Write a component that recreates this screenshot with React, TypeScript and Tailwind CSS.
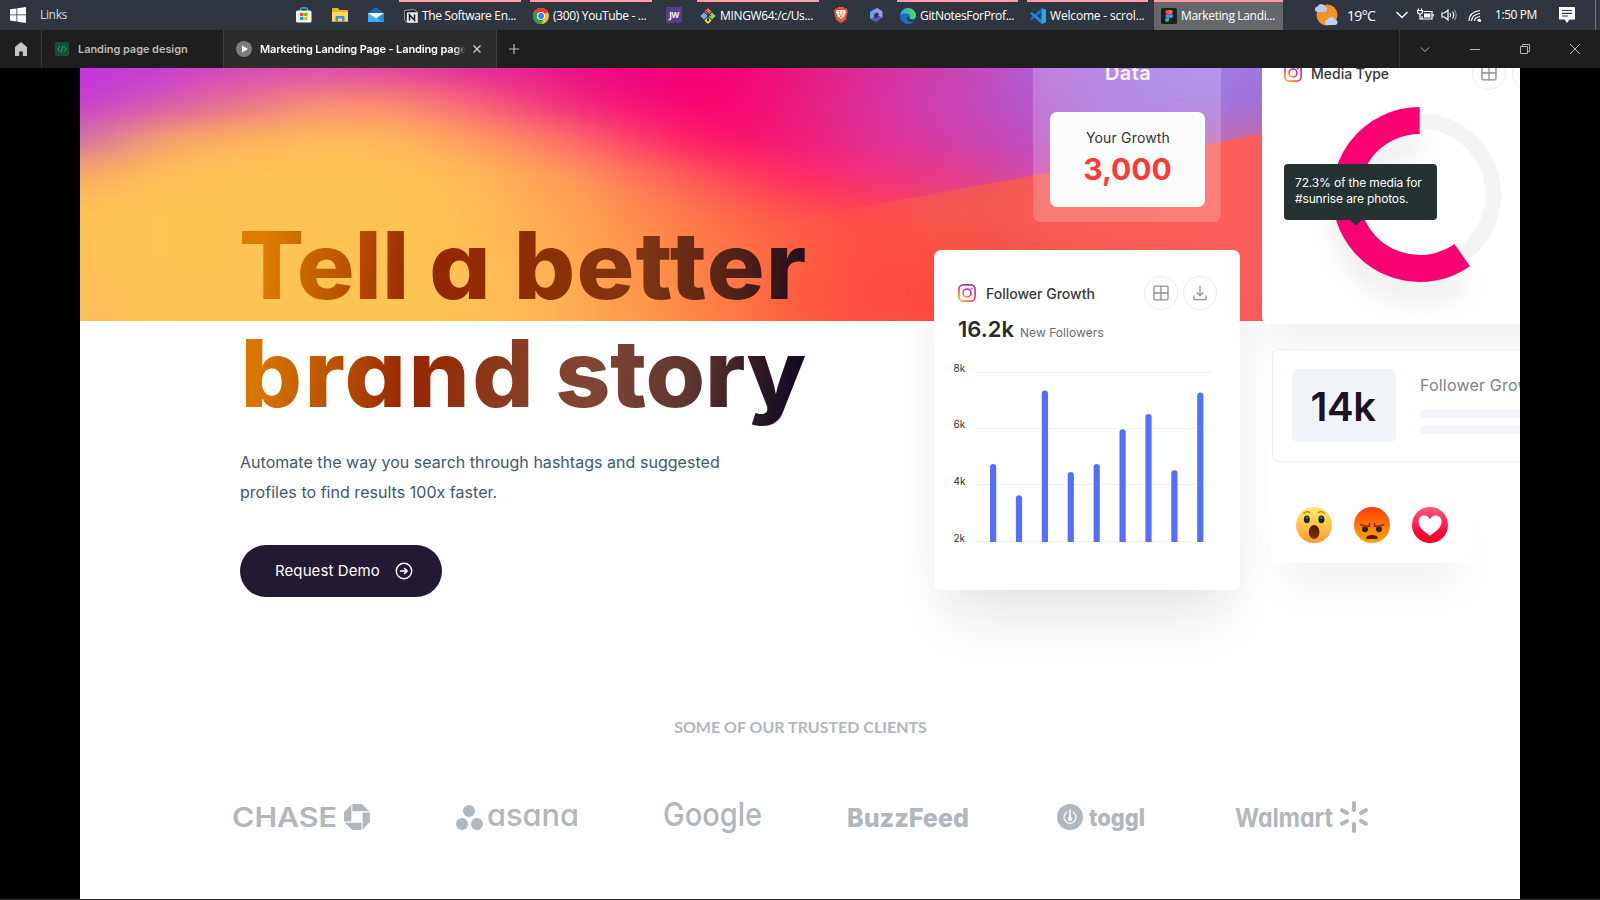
import React from "react";
import { SiBrave, SiChase } from "react-icons/si";

const heroMesh: string[][] = [
  ["#c034e0","#c93cd4","#d646bc","#dd4cb0","#e0409f","#e4289b","#e9148c","#ee0080","#f80070","#e8187f","#d830a0","#c843b4","#b060d8","#a070e0","#a080e8","#9c78dc"],
  ["#c83cd0","#d458b0","#e8748c","#fb9076","#fc8a70","#f8607a","#f03080","#f40c78","#fb006e","#e8207e","#d930a0","#c848b8","#b058d0","#a070e0","#a474e4","#a070d8"],
  ["#d070a8","#f8a468","#ffb45c","#ffbc58","#ffb85a","#ff9c60","#ff7468","#fc3c6c","#fd1068","#f01c78","#e0309a","#cf40a8","#bc50c8","#a468d8","#b06cc4","#d070a0"],
  ["#fdaa64","#ffc055","#ffc453","#ffc453","#ffc453","#ffb856","#ff9e5a","#ff7658","#ff4858","#ff2868","#f23080","#e23c90","#cc4cb0","#d060a0","#ff6060","#ff6060"],
  ["#ffc455","#ffc653","#ffc453","#ffc453","#ffc353","#ffbb54","#ffa852","#ff8850","#ff6c48","#ff5048","#ff4050","#f05060","#f05868","#ff5a5c","#ff5e5c","#ff6060"],
  ["#ffc455","#ffc653","#ffc453","#ffc453","#ffc453","#ffbe54","#ffac50","#ff914c","#ff7846","#ff6042","#ff4a40","#ff4e46","#ff5850","#ff5d58","#ff5e5c","#ff6060"],
  ["#ffc058","#ffc554","#ffc453","#ffc453","#ffc453","#ffc055","#ffb054","#ff964a","#ff7c44","#ff6240","#ff4b3e","#ff4e42","#ff554c","#ff5a54","#ff5e5c","#ff6060"],
  ["#ffbc5c","#ffc455","#ffc453","#ffc453","#ffc453","#ffc055","#ffb054","#ff9848","#ff7e44","#ff6240","#ff4c40","#ff4e42","#ff554c","#ff5a54","#ff5e5c","#ff6060"],
];

function HeroBackdrop() {
  return (
    <svg className="absolute left-0 top-0" width="1440" height="253" viewBox="0 0 1440 253">
      <defs>
        <filter id="soft" x="-10%" y="-40%" width="120%" height="180%" colorInterpolationFilters="sRGB">
          <feGaussianBlur stdDeviation="34 15" />
        </filter>
        <linearGradient id="wedge" gradientUnits="userSpaceOnUse" x1="660" x2="1240" y1="0" y2="0">
          <stop offset="0" stopColor="#ff6a48" stopOpacity="0" />
          <stop offset="0.2" stopColor="#ff6048" stopOpacity="0.25" />
          <stop offset="0.42" stopColor="#f25a4c" stopOpacity="0.85" />
          <stop offset="0.6" stopColor="#fb5c54" />
          <stop offset="0.9" stopColor="#ff605e" />
        </linearGradient>
        <radialGradient id="wedgeLow" gradientUnits="userSpaceOnUse" cx="0" cy="0" r="1" gradientTransform="translate(850 225) scale(185 85)">
          <stop offset="0" stopColor="#ff493e" stopOpacity="0.9" />
          <stop offset="1" stopColor="#ff4c40" stopOpacity="0" />
        </radialGradient>
      </defs>
      <g filter="url(#soft)">
        {heroMesh.map((row, r) =>
          row.map((c, i) => (
            <rect
              key={`${r}-${i}`}
              x={i === 0 ? -160 : i * 80 - 40}
              y={r === 0 ? -90 : r * 36 - 18}
              width={i === 0 ? 201 : i === 15 ? 400 : 81}
              height={r === 0 ? 109 : r === 7 ? 120 : 37}
              fill={c}
            />
          )),
        )}
      </g>
      <polygon points="660,161 1182,66 1440,20 1440,253 660,253" fill="url(#wedge)" />
      <polygon points="660,161 1182,66 1182,253 660,253" fill="url(#wedgeLow)" />
    </svg>
  );
}

function InstaIcon({ id }: { id: string }) {
  return (
    <svg width="18" height="18" viewBox="0 0 18 18" fill="none">
      <defs>
        <linearGradient id={id} x1="0.1" y1="1" x2="0.75" y2="0">
          <stop offset="0" stopColor="#ffb52e" />
          <stop offset="0.45" stopColor="#ff2f5a" />
          <stop offset="0.75" stopColor="#d22a90" />
          <stop offset="1" stopColor="#8a3ac8" />
        </linearGradient>
      </defs>
      <rect x="0.9" y="0.9" width="16.2" height="16.2" rx="4.4" stroke={`url(#${id})`} strokeWidth="1.6" />
      <circle cx="9" cy="9" r="4" stroke={`url(#${id})`} strokeWidth="1.6" />
      <circle cx="13.6" cy="4.4" r="1" fill="#c82a9a" />
    </svg>
  );
}

function RoundButton({ kind }: { kind: "grid" | "download" }) {
  return (
    <div className="flex size-[34px] shrink-0 items-center justify-center rounded-full border border-[#ebeeee] text-[#8f8f8f]">
      <svg width="16" height="16" viewBox="0 0 16 16" fill="none" stroke="currentColor" strokeWidth="1.3" strokeLinecap="round" strokeLinejoin="round">
        {kind === "grid" ? (
          <>
            <rect x="1" y="1.2" width="14" height="13.6" rx="1.4" />
            <path d="M8 1.2v13.6M1 8h14" />
          </>
        ) : (
          <>
            <path d="M8 1.2v9.2M5.2 7.8 8 10.6l2.8-2.8" />
            <path d="M2 10.8v2.6c0 .8.5 1.3 1.3 1.3h9.4c.8 0 1.3-.5 1.3-1.3v-2.6" />
          </>
        )}
      </svg>
    </div>
  );
}

const bars = [78, 46.7, 151.3, 70, 78, 112.7, 128, 71.7, 149.3];

function FollowerCard() {
  return (
    <div className="mt-[28px] h-[340px] w-[306px] rounded-[7px] bg-white pt-[26px] shadow-[0_44px_50px_-14px_rgba(0,0,0,0.09),0_0_50px_rgba(0,0,0,0.03)]">
      <div className="flex items-center pl-6 pr-[23px]">
        <InstaIcon id="ig-a" />
        <span className="ml-[10px] flex-1 text-[14px] font-medium text-[#383838]">Follower Growth</span>
        <div className="flex gap-[5px]">
          <RoundButton kind="grid" />
          <RoundButton kind="download" />
        </div>
      </div>
      <div className="mt-[5px] flex items-baseline pl-6">
        <span className="text-[22px] font-semibold leading-[28px] text-[#2b2b2b]">16.2k</span>
        <span className="ml-[6px] text-[12px] tracking-[0.005em] text-[#6a6a6a]">New Followers</span>
      </div>
      <svg className="mt-[15px] block" width="306" height="200" viewBox="0 0 306 200">
        {[14.5, 70.5, 126.5, 183.5].map((y) => (
          <rect key={y} x="42" y={y - 0.5} width="236" height="1" fill="#eff2f3" />
        ))}
        {([["8k", 14], ["6k", 70], ["4k", 126.5], ["2k", 183.5]] as [string, number][]).map(([t, y]) => (
          <text key={t} x="19.5" y={y} fontSize="10" fill="#2f2f2f" fontFamily="Inter, sans-serif">{t}</text>
        ))}
        {bars.map((h, i) => (
          <path
            key={i}
            d={`M${56 + i * 25.9} 184V${184 - h + 3}a3.1 3.1 0 0 1 6.2 0V184z`}
            fill="#546fff"
          />
        ))}
      </svg>
    </div>
  );
}

function MediaCard() {
  return (
    <div className="flow-root h-[256px] w-[330px] rounded-b-[7px] bg-white shadow-[0_20px_50px_rgba(0,0,0,0.06)]">
      <div className="-mt-3 flex items-center pl-[22px]">
        <InstaIcon id="ig-b" />
        <span className="ml-[9px] w-[161px] text-[14px] font-medium text-[#383838]">Media Type</span>
        <div className="flex gap-[6px]">
          <RoundButton kind="grid" />
          <RoundButton kind="download" />
        </div>
      </div>
      <div className="relative">
        <svg className="block" width="258" height="230" viewBox="0 0 258 230">
          <defs>
            <filter id="donut-shadow" x="-30%" y="-30%" width="160%" height="170%">
              <feGaussianBlur stdDeviation="13" />
            </filter>
          </defs>
          <g transform="translate(157.700 104.5)" fill="none">
            <path d="M0 -74A74 74 0 1 0 42 61" transform="translate(0 22)" stroke="#000" strokeOpacity="0.08" strokeWidth="24" filter="url(#donut-shadow)" />
            <path d="M0 -73.4A73.4 73.4 0 0 1 42.4 60" stroke="#f4f4f4" strokeWidth="15.5" />
            <path d="M0 -74A74 74 0 1 0 42.5 60.6" stroke="#f90072" strokeWidth="27" />
          </g>
        </svg>
        <div className="absolute left-[22px] top-[74px] h-[56px] w-[153px] rounded-[4px] bg-[#263132] pl-[11px] pt-[11px] text-[12px] leading-[16px] tracking-[-0.012em] text-white">
          72.3% of the media for<br />#sunrise are photos.
          <svg className="absolute left-[64px] top-[55px]" width="16" height="7" viewBox="0 0 16 7">
            <path d="M1 0h14L8 6.5z" fill="#263132" />
          </svg>
        </div>
      </div>
    </div>
  );
}

function CountCard() {
  return (
    <div className="ml-[10px] mt-[25px] flex h-[113px] w-[330px] rounded-[7px] border border-[#e9eef1] bg-white pl-[19px] pt-[19px]">
      <div className="flex h-[73px] w-[104px] items-center justify-center rounded-[6px] bg-[#f1f4f9] pr-[2px] pt-[2px] text-[40px] font-semibold tracking-[-0.01em] text-[#1b1024]">
        14k
      </div>
      <div className="ml-6 w-[180px] pt-[4px]">
        <p className="whitespace-nowrap text-[16px] leading-6 tracking-[0.012em] text-[#7d828c]">Follower Growth</p>
        <div className="mt-[13px] h-2 rounded-full bg-[#f1f4f9]" />
        <div className="mt-2 h-2 rounded-full bg-[#f1f4f9]" />
      </div>
    </div>
  );
}

function Reactions() {
  return (
    <div className="ml-[10px] mt-[25px] flex h-[76px] w-[199px] items-center gap-[22px] rounded-[7px] bg-white pl-6 shadow-[0_34px_40px_-10px_rgba(0,0,0,0.05)]">
      <svg width="36" height="36" viewBox="0 0 36 36">
        <defs>
          <linearGradient id="wow" x2="0" y2="1"><stop stopColor="#fdee6c" /><stop offset="1" stopColor="#ff9a2e" /></linearGradient>
          <linearGradient id="mouth" x2="0" y2="1"><stop stopColor="#4b1a04" /><stop offset="1" stopColor="#7c3304" /></linearGradient>
        </defs>
        <circle cx="18" cy="18" r="18" fill="url(#wow)" />
        <ellipse cx="10.8" cy="12.4" rx="3" ry="3.8" fill="#1f2730" />
        <ellipse cx="25.4" cy="12.4" rx="3" ry="3.8" fill="#1f2730" />
        <circle cx="11" cy="10.8" r="1.1" fill="#5b6d80" /><circle cx="25.4" cy="10.8" r="1.1" fill="#5b6d80" />
        <ellipse cx="18.1" cy="25" rx="5.3" ry="7" fill="url(#mouth)" />
        <path d="M7.8 6.2Q10.5 3.6 13.8 5.4M22.4 5.4Q25.7 3.6 28.4 6.2" stroke="#e8791c" strokeWidth="1.5" fill="none" strokeLinecap="round" />
      </svg>
      <svg width="36" height="36" viewBox="0 0 36 36">
        <defs><linearGradient id="angry" x2="0" y2="1"><stop stopColor="#fb3b0c" /><stop offset="0.6" stopColor="#ff8208" /><stop offset="1" stopColor="#ffa60a" /></linearGradient></defs>
        <circle cx="18" cy="18" r="18" fill="url(#angry)" />
        <circle cx="11" cy="22.2" r="3" fill="#1f2730" /><circle cx="25" cy="22.2" r="3" fill="#1f2730" />
        <path d="M6.6 17.6Q10 19.6 15.4 19.2V16.6M29.6 17.6Q26 19.6 20.6 19.2V16.6" stroke="#a82208" strokeWidth="1.7" fill="none" strokeLinecap="round" />
        <path d="M12 31.4c0-4.6 12-4.6 12 0 0 .8-12 .8-12 0z" fill="#5a1004" />
      </svg>
      <svg width="36" height="36" viewBox="0 0 36 36">
        <defs><linearGradient id="love" x2="0" y2="1"><stop stopColor="#fb5b7c" /><stop offset="0.7" stopColor="#ff063c" /><stop offset="1" stopColor="#fd001c" /></linearGradient></defs>
        <circle cx="18" cy="18" r="18" fill="url(#love)" />
        <path d="M18 12.4C16.6 9.6 14.4 8.6 12.3 8.6 9 8.6 6.6 11 6.6 14.6c0 6.8 7.2 11 11.4 14.2 4.2-3.2 11.6-7.4 11.6-14.2 0-3.6-2.6-6-5.8-6-2.200 0-4.400 1-5.800 3.800z" fill="#fff" />
      </svg>
    </div>
  );
}

function Logo({ w, children }: { w: number; children: React.ReactNode }) {
  return (
    <svg className="overflow-visible" width={w} height="44" viewBox={`0 0 ${w} 44`} fill="#b0b7bd" fontFamily="Inter, 'Liberation Sans', sans-serif" style={{ fontFeatureSettings: '"cv11"' }}>
      {children}
    </svg>
  );
}

function Clients() {
  return (
    <div className="mt-[57px] flex items-center pl-[152px]">
      <Logo w={140}>
        <text transform="translate(0 30.500) scale(1.25 1)" fontSize="27" fontWeight="600" textLength="84" lengthAdjust="spacingAndGlyphs">CHASE</text>
        <g transform="translate(112 8)"><SiChase size={26} color="#b0b7bd" /></g>
      </Logo>
      <div className="ml-[84px] flex">
        <Logo w={124}>
          <circle cx="13" cy="15" r="6" /><circle cx="6" cy="28" r="6" /><circle cx="21" cy="28" r="6" />
          <text x="31" y="29.500" fontSize="31" fontWeight="500" textLength="92" lengthAdjust="spacingAndGlyphs">asana</text>
        </Logo>
      </div>
      <div className="ml-[83px] flex">
        <Logo w={100}>
          <text x="0" y="29.500" fontSize="33" fontWeight="500" textLength="99" lengthAdjust="spacingAndGlyphs">Google</text>
        </Logo>
      </div>
      <div className="ml-[85px] flex">
        <Logo w={124}>
          <text x="-1" y="30.500" fontSize="26" fontWeight="800" textLength="122" lengthAdjust="spacingAndGlyphs">BuzzFeed</text>
        </Logo>
      </div>
      <div className="ml-[85px] flex">
        <Logo w={88}>
          <circle cx="13" cy="21" r="13" />
          <g transform="translate(0 -1)" stroke="#fff" fill="none" strokeLinecap="round"><path d="M9.800 17.200a6 6 0 1 0 6.400 0" strokeWidth="1.300" /><path d="M13 15v9.500" strokeWidth="1.500" /><circle cx="13" cy="24" r="1.200" strokeWidth="2" /></g>
          <text x="32" y="29.500" fontSize="24" fontWeight="800" textLength="56" lengthAdjust="spacingAndGlyphs">toggl</text>
        </Logo>
      </div>
      <div className="ml-[90px] flex">
        <Logo w={136}>
          <text x="0" y="30.500" fontSize="26" fontWeight="700" textLength="98" lengthAdjust="spacingAndGlyphs">Walmart</text>
          <g stroke="#b0b7bd" strokeWidth="4" strokeLinecap="round">
            <path d="M119 7v7M119 28v7M107 14.200l5 2.900M131 14.200l-5 2.900M107 27.800l5-2.900M131 27.800l-5-2.900" />
          </g>
        </Logo>
      </div>
    </div>
  );
}

function Page() {
  return (
    <main className="relative mx-auto h-[831px] w-[1440px] overflow-hidden bg-white">
      <HeroBackdrop />
      <div className="relative flex h-[600px]">
        <section className="w-[854px] shrink-0 pl-40 pt-[143px]">
          <h1 className="w-[551px] origin-left scale-x-[1.037] text-[93px] font-extrabold leading-[108px] [font-feature-settings:'cv11']">
            <span className="flex h-[108px] whitespace-nowrap bg-[linear-gradient(97deg,#dc7c00_5%,#b85000_20%,#952600_32%,#8b3000_54%,#7f3412_70%,#4c1e18_88%,#200e1c_98%)] bg-clip-text text-transparent">
              <span className="-ml-px w-[183.500px]">Tell</span>
              <span className="w-[81.500px]">a</span>
              <span className="tracking-[1.100px]">better</span>
            </span>
            <span className="flex h-[118px] whitespace-nowrap bg-[linear-gradient(97deg,#d87600_4%,#b85000_18%,#962600_30%,#8b3a1e_46%,#7e4636_62%,#5f3530_78%,#2c1822_90%,#150c24_96%)] bg-clip-text text-transparent">
              <span className="ml-[0.500px] w-[303.500px] tracking-[2.300px]">brand</span>
              <span className="tracking-[-0.400px]">story</span>
            </span>
          </h1>
          <p className="mt-[10px] text-[16px] leading-[30px] tracking-[0.002em] text-[#40586b]">
            Automate the way you search through hashtags and suggested<br />
            profiles to find results 100x faster.
          </p>
          <button className="mt-[38px] flex h-[52px] w-[202px] items-center rounded-full bg-[#241933] pl-[35px] text-[15px] tracking-[0.006em] text-white">
            Request Demo
            <svg className="ml-[15px]" width="18" height="18" viewBox="0 0 18 18" fill="none" stroke="currentColor" strokeWidth="1.400" strokeLinecap="round" strokeLinejoin="round">
              <circle cx="9" cy="9" r="7.700" />
              <path d="M5.600 9h6.200M9.600 6.500 12.100 9l-2.500 2.500" strokeWidth="1.700" />
            </svg>
          </button>
        </section>
        <section className="w-[328px] shrink-0">
          <div className="ml-[99px] flow-root h-[154px] w-[188px] rounded-b-[8px] bg-white/20 px-[17px]">
            <p className="-mt-[9px] h-[53px] pl-[2px] text-center text-[20px] font-semibold leading-7 tracking-[0.02em] text-white/90">Data</p>
            <div className="h-[95px] w-[155px] rounded-[7px] bg-[#fcfcfc] pt-[16px] text-center">
              <p className="pl-px text-[14px] leading-5 tracking-[0.012em] text-[#303236]">Your Growth</p>
              <p className="mt-[3px] text-[30px] font-bold leading-9 text-[#ff3a36]">3,000</p>
            </div>
          </div>
          <FollowerCard />
        </section>
        <section className="w-[258px] shrink-0">
          <MediaCard />
          <CountCard />
          <Reactions />
        </section>
      </div>
      <p className="mt-[47px] pl-px text-center font-['Lato'] text-[16px] font-bold leading-6 text-[#b0b7bf]">SOME OF OUR TRUSTED CLIENTS</p>
      <Clients />
    </main>
  );
}

function Task({ icon, label, active, className }: { icon: React.ReactNode; label: string; active?: boolean; className: string }) {
  return (
    <div className={`flex h-[30px] shrink-0 items-center border-t-2 border-[#ff9da6] pb-[1px] ${active ? "bg-[#66676a]" : ""} ${className}`}>
      {icon}
      <span className="ml-1 whitespace-nowrap">{label}</span>
    </div>
  );
}

function Taskbar() {
  return (
    <div className="flex h-[30px] items-center bg-[#2f3640] font-['Open_Sans'] text-[12px] tracking-[-0.028em] text-white">
      <svg className="ml-[10px]" width="16" height="16" viewBox="0 0 16 16" fill="#fff"><path d="M0 2.300 6.500 1.400v6.100H0zM7.300 1.300 16 0v7.500H7.300zM0 8.300h6.500v6.200L0 13.600zM7.300 8.300H16V16l-8.700-1.300z" /></svg>
      <span className="ml-[14px] w-[256px] text-[#d5d8dc]">Links</span>
      <svg width="16" height="16" viewBox="0 0 16 16"><path d="M4.500 4V2q0-1 1-1h5q1 0 1 1v2" fill="none" stroke="#29b3e8" strokeWidth="1.300" /><rect y="3.500" width="15.500" height="12" rx="1.500" fill="#f5f5f5" /><path d="M4 5.800h3.500V9H4z" fill="#f0502c" /><path d="M8.200 5.800h3.500V9H8.200z" fill="#7fba00" /><path d="M4 9.800h3.500V13H4z" fill="#00a4ef" /><path d="M8.200 9.800h3.500V13H8.200z" fill="#ffb900" /></svg>
      <svg className="ml-5" width="16" height="16" viewBox="0 0 16 16"><path d="M0 2q0-1 1-1h5l1.500 2H16v11.500H0z" fill="#f5b11c" /><path d="M0 5h16v9.500H0z" fill="#ffd764" /><path d="M3.500 14.500V10q0-1 1-1h7q1 0 1 1v4.500H10v-3H6v3z" fill="#3a8fe0" /></svg>
      <svg className="ml-5" width="16" height="16" viewBox="0 0 16 16"><path d="M0 6 8 0l8 6v2H0z" fill="#1565c0" /><path d="M0 6h16v9H0z" fill="#1f8fdc" /><path d="M0 6v9h16z" fill="#35b5f2" /><path d="M0 6h16l-8 5.500z" fill="#f4f9fd" /></svg>
      <Task className="ml-[15px] w-[122px] pl-[5px]" label="The Software En..." icon={
        <svg width="14" height="14" viewBox="0 0 14 14"><path d="M.5 1.500 10 .5l3.500 2.500v10.500H3L.5 10.500z" fill="#1c1f24" stroke="#b9bcbf" strokeWidth="0.800" /><rect x="2.800" y="3.200" width="10.700" height="10.300" rx="0.800" fill="#e9e9e9" /><path d="M5.500 11.500V5.800l5 5.600V5.500" fill="none" stroke="#15181c" strokeWidth="1.500" /></svg>
      } />
      <Task className="ml-[9px] w-[122px] pl-[3px]" label="(300) YouTube - ..." icon={
        <svg width="16" height="16" viewBox="0 0 16 16"><circle cx="8" cy="8" r="8" fill="#fbc116" /><path d="M8 8 1.070 4A8 8 0 0 1 14.930 4z" fill="#e33b2e" /><path d="M1.070 4A8 8 0 0 0 8 16l3.500-6z" fill="#2a9d48" /><circle cx="8" cy="8" r="4" fill="#fff" /><circle cx="8" cy="8" r="3" fill="#3b7ded" /></svg>
      } />
      <div className="ml-[14px] flex h-4 w-4 items-center justify-center bg-[#5b3c8c] text-[8px] font-bold">JW</div>
      <Task className="ml-[15px] w-[122px] pl-[3px]" label="MINGW64:/c/Us..." icon={
        <svg width="16" height="16" viewBox="0 0 16 16"><path d="m8 0 3.600 3.600L8 7.200 4.400 3.600z" fill="#f06a6a" /><path d="m4 4.400 3.600 3.600L4 11.600.4 8z" fill="#7eaef0" /><path d="m12 4.400 3.600 3.600-3.600 3.600L8.400 8z" fill="#8bd45c" /><path d="m8 8.800 3.600 3.600L8 16l-3.600-3.600z" fill="#f8d850" /><path d="M6 3l2 2v6M8 6l3 2" stroke="#1c2430" strokeWidth="1" fill="none" /><circle cx="8" cy="12" r="1.200" fill="#1c2430" /></svg>
      } />
      <span className="relative ml-[14px] flex h-4 w-4 items-center justify-center">
        <span className="absolute left-[3px] top-[3px] h-[9px] w-[10px] rounded-b-[5px] bg-white" />
        <SiBrave className="relative" size={16} color="#fb542b" />
      </span>
      <svg className="ml-[19px]" width="16" height="16" viewBox="0 0 16 16"><path d="M8.500 1 3 4.200Q2 5 2 6v5.500L6 14V7.500L11 4z" fill="#62a8ec" /><path d="m9 1 4.500 2.500Q14.500 4.200 14.500 5.500V11L10.500 9V6.200L7 4.500z" fill="#a98ff0" /><path d="M14.500 10.500 9 14.500Q8 15.200 7 14.600L2.200 11.500 6 10l2 1 2.500-1.500z" fill="#6a52cf" /></svg>
      <Task className="ml-[13px] w-[121px] pl-[3px]" label="GitNotesForProf..." icon={
        <svg width="16" height="16" viewBox="0 0 16 16"><defs><linearGradient id="edge" x2="1"><stop stopColor="#28a5e8" /><stop offset="1" stopColor="#5ad860" /></linearGradient></defs><circle cx="8" cy="8" r="8" fill="#1470c4" /><path d="M.1 7A8 8 0 0 1 16 7.500c0 2.500-2 3.500-4 3.500s-2.500-.8-2-1.500c1.500-3-3-6-9.900-2.500z" fill="url(#edge)" /><path d="M9.500 10.500c1 1.500 3.500 2 6 .8l-1 2C10 15 6 12 7 8.500z" fill="#2f3640" /></svg>
      } />
      <Task className="ml-[9px] w-[121px] pl-[3px] tracking-[-0.015em]" label="Welcome - scrol..." icon={
        <svg width="16" height="16" viewBox="0 0 16 16"><path d="m11.500 0 4.500 1.800v12.400L11.500 16z" fill="#2aa8f2" /><path d="M12 4 1.500 12 0 10.700 11.500 0z" fill="#0a78c8" /><path d="M12 12 1.500 4 0 5.300 11.500 16z" fill="#1590dc" /></svg>
      } />
      <Task active className="ml-[6px] w-[129px] pl-[7px]" label="Marketing Landi..." icon={
        <svg width="16" height="16" viewBox="0 0 16 16"><rect width="16" height="16" rx="1.500" fill="#1e1e1e" /><path d="M8 2H6.300a2 2 0 0 0 0 4H8z" fill="#f24e1e" /><path d="M8 2h1.700a2 2 0 0 1 0 4H8z" fill="#ff7262" /><path d="M8 6H6.300a2 2 0 0 0 0 4H8z" fill="#a259ff" /><circle cx="9.900" cy="8" r="2" fill="#1abcfe" /><path d="M8 10H6.300A2 2 0 1 0 8 12z" fill="#0acf83" /></svg>
      } />
      <svg className="ml-[31px]" width="25" height="24" viewBox="0 0 25 24"><circle cx="13" cy="12" r="10.500" fill="#f59324" /><path d="M3 9a2.800 2.800 0 0 1 .5-5.500 4 4 0 0 1 7.500 0A2.800 2.800 0 0 1 11 9z" fill="#b5cdf2" /><path d="M13 22a2.800 2.800 0 0 1 .5-5.500 4 4 0 0 1 7.500 0 2.800 2.800 0 0 1 .5 5.500z" fill="#bcd0f4" /></svg>
      <span className="ml-[8px] w-[48px] text-[14px] tracking-[-0.045em]">19°C</span>
      <svg width="14" height="16" viewBox="0 0 14 16" fill="none" stroke="#fff" strokeWidth="1.400"><path d="m1.500 5 5.500 5.500L12.500 5" /></svg>
      <svg className="ml-[8px]" width="17" height="16" viewBox="0 0 17 16" fill="none" stroke="#fff" strokeWidth="1.200"><path d="M6.500 4.500H15v7.500H5V9" /><path d="M7 6.500h6.500V10.500H7z" fill="#fff" stroke="none" /><path d="M16.200 7v2.500M1.500 1.500v2M4.500 1.500v2M.6 3.500h4.800v2Q5 7 3 7T.6 5.500zM3 7v5h2" /></svg>
      <svg className="ml-[7px]" width="17" height="16" viewBox="0 0 17 16" fill="none" stroke="#fff" strokeWidth="1.200"><path d="M1 6h2.500L7 3v10L3.500 10H1z" /><path d="M9 6q1.500 2 0 4M11.500 4.500q2.500 3.500 0 7" /><path d="M13.500 3q3.500 5 0 10" opacity=".45" /></svg>
      <svg className="ml-[10px]" width="14" height="16" viewBox="0 0 14 16" fill="none" stroke="#fff" strokeWidth="1.200"><path d="M6.500 14q0-3.500 5.500-4.500M3.500 14Q4 7.500 12 6.500M1 14Q1 5 12 3.500M9.500 14q0-1.500 2.500-2" /><circle cx="11.500" cy="13.500" r="1" fill="#fff" /></svg>
      <span className="ml-[13px] w-[64px] whitespace-nowrap text-[12px] tracking-[-0.036em]">1:50 PM</span>
      <svg width="16" height="16" viewBox="0 0 16 16"><path d="M0 0h16v12.500h-5.500L8 16l-2.500-3.500H0z" fill="#fff" /><path d="M3 3.500h10M3 6.300h10M3 9h6" stroke="#2f3640" strokeWidth="1.200" /></svg>
      <div className="ml-auto mr-1 h-[30px] w-px bg-[#6f757c]" />
    </div>
  );
}

function TabBar() {
  return (
    <div className="flex h-[38px] items-stretch bg-[#1e1e1e] font-['Inter'] text-[11px] font-semibold text-[#b8b8b8]">
      <div className="flex w-[42px] items-center justify-center border-r border-[#383838]">
        <svg width="12" height="14" viewBox="0 0 12 14" fill="#c4c4c4"><path d="M6 0 12 5v9H7.800v-4.500H4.200V14H0V5z" /></svg>
      </div>
      <div className="flex w-[181px] items-center pl-[13px]">
        <div className="flex size-[14px] items-center justify-center rounded-[2px] bg-[#14503a]">
          <svg width="10" height="8" viewBox="0 0 10 8" fill="none" stroke="#5f9a84" strokeWidth="0.900"><path d="M2.800 1.500.8 4l2 2.500M7.200 1.500l2 2.500-2 2.500M5.800 1 4.200 7" /></svg>
        </div>
        <span className="ml-[9px] whitespace-nowrap tracking-[-0.005em]">Landing page design</span>
      </div>
      <div className="flex w-[274px] items-center border-x border-[#3a3a3a] bg-[#2c2c2c] pl-[12px] text-white">
        <svg width="16" height="16" viewBox="0 0 16 16"><circle cx="8" cy="8" r="8" fill="#7d7d7d" /><path d="m6 4.500 6 3.500-6 3.500z" fill="#fff" /></svg>
        <span className="ml-2 w-[206px] overflow-hidden whitespace-nowrap tracking-[-0.012em] [mask-image:linear-gradient(90deg,#000_94%,transparent)]">Marketing Landing Page - Landing page</span>
        <svg className="ml-[7px]" width="8" height="8" viewBox="0 0 8 8" stroke="#ccc" strokeWidth="1.400"><path d="m.5.500 7 7m0-7-7 7" /></svg>
      </div>
      <div className="flex w-[34px] items-center justify-center">
        <svg width="10" height="10" viewBox="0 0 10 10" stroke="#bbb" strokeWidth="1.200"><path d="M5 0v10M0 5h10" /></svg>
      </div>
      <div className="ml-auto flex w-[201px] items-center border-l border-[#383838]">
        {[
          <path key="a" d="m2 4.500 4 4 4-4" />,
          <path key="b" d="M1 6.500h10" />,
          <path key="c" d="M1.500 3.500h7v7h-7zM3.500 3.500v-2h7v7h-2" />,
          <path key="d" d="m1 1 10 10M11 1 1 11" />,
        ].map((p, i) => (
          <div key={i} className="flex w-[50px] justify-center">
            <svg width="12" height="12" viewBox="0 0 12 12" fill="none" stroke="#b5b5b5">{p}</svg>
          </div>
        ))}
      </div>
    </div>
  );
}

export default function App() {
  return (
    <div className="h-[900px] w-[1600px] overflow-hidden bg-black font-['Inter'] leading-normal">
      <Taskbar />
      <TabBar />
      <Page />
      <div className="h-px bg-[#2b2b2b]" />
    </div>
  );
}
